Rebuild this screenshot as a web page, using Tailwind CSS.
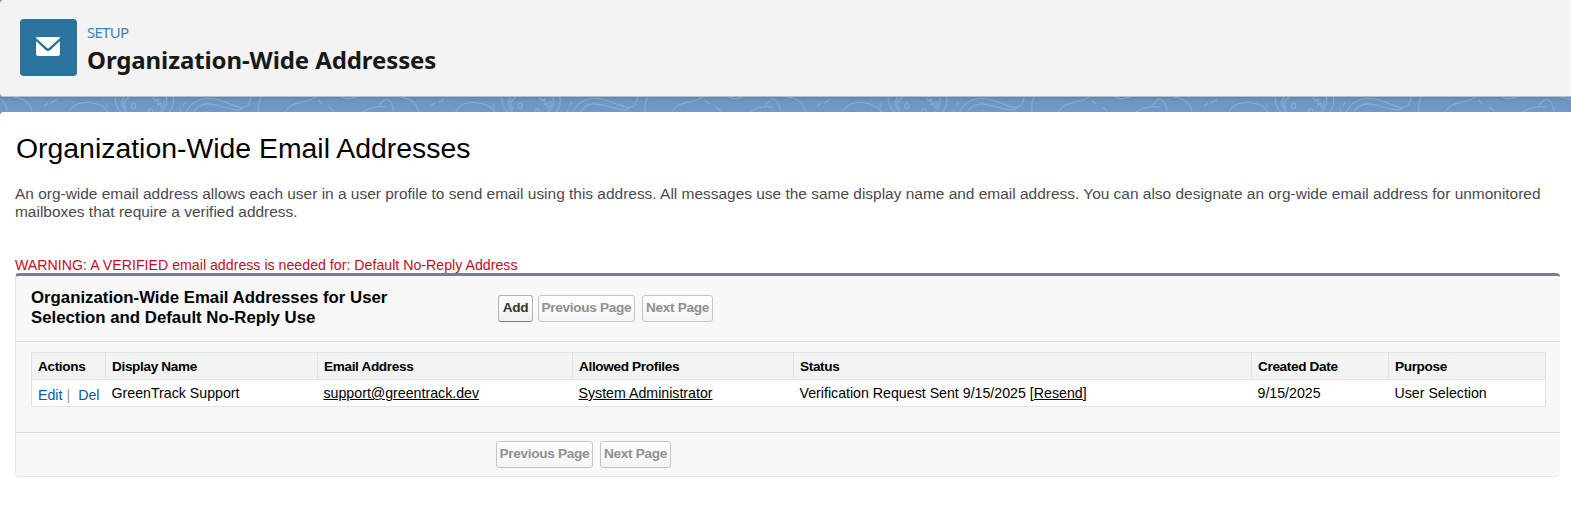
<!DOCTYPE html>
<html lang="en">
<head>
<meta charset="utf-8">
<title>Organization-Wide Addresses</title>
<script src="https://cdn.jsdelivr.net/npm/@tailwindcss/browser@4"></script>
</head>
<body class="h-[509px] overflow-hidden bg-[#6d98c5] font-['Liberation_Sans',Arial,sans-serif] text-black">
<header class="flex h-[97px] items-start rounded-l-[4px] border-b border-[#c0c0c0] bg-[#f3f3f3] pt-[19px] pl-5">
  <div class="flex size-[57px] items-center justify-center rounded-[4px] bg-[#2a739e]">
    <svg class="mt-[-2px] ml-[-1px]" width="24" height="19" viewBox="0 0 24 19" fill="#fff"><path d="M0 1Q0 0 1 0H23Q24 0 24 1L13.200 10.800Q12 11.800 10.800 10.800Z"/><path d="M0 4L9.600 13Q12 15 14.400 13L24 4V16.800Q24 19 21.800 19H2.200Q0 19 0 16.800Z"/></svg>
  </div>
  <div class="ml-[10px] whitespace-nowrap font-['Noto_Sans','Open_Sans',sans-serif]">
    <div class="mt-[3px] h-5 text-[15px] leading-5 tracking-[-0.75px] text-[#3a82b3]">SETUP</div>
    <h1 class="mt-[2px] h-8 text-[24px] leading-8 font-bold tracking-[-0.1px] text-[#181818]">Organization-Wide Addresses</h1>
  </div>
</header>
<svg class="block bg-linear-to-b from-[#6088b3] via-[#6c96c4] via-30% to-[#709bc9]" width="1571" height="15" viewBox="0 0 1571 15" fill="none">
  <defs>
    <pattern id="topo" width="386.7" height="15" patternUnits="userSpaceOnUse">
      <g stroke="#9ab9de" stroke-opacity=".65" stroke-width="1.1" fill="none">
        <path d="M0 2Q6 5 7 14M13 0Q29 1 32 15M44 9l4-3M51 6l6-4"/>
        <path d="M69 15C75 3 90 5 97 7Q105 10 108 15M107 6v5"/>
        <path d="M115 0Q115 10 121 15M124 0Q119 7 126 15M129 0Q120 7 127 12"/>
        <ellipse cx="133.500" cy="9" rx="2" ry="3"/>
        <path d="M149 15q-1-4 3-3l1 3M153 0l2 4 3-2 0 6 3-2 0 5 3-2V4M166 0Q169 8 161 15M173 0Q175 9 169 15M185 5l-2 4M181 12l-1 3"/>
        <path d="M186 15C194 0 207 0 219 3C232 7 243 15 249 7L251 0M194 15C201 3 213 7 223 10C232 12 238 15 243 11M261 0Q257 8 259 15"/>
        <path d="M285 15C292 3 303 8 316 0M318 3l5 4M329 10l5 4M342 0l5 2 10-2M363 15C373 8 388 8 397 14M378 10Q384 0 389 2Q394 4 394 11"/>
      </g>
    </pattern>
  </defs>
  <rect width="1571" height="15" fill="url(#topo)"/>
</svg>
<main class="h-[397px] rounded-tl-[4px] bg-white pl-[15px]">
  <h2 class="h-[72px] pt-[20px] pl-px text-[28.4px] leading-8 whitespace-nowrap">Organization-Wide Email Addresses</h2>
  <p class="h-[72px] pt-px text-[15.46px] leading-[18px] whitespace-nowrap text-[#4a4a4c]">An org-wide email address allows each user in a user profile to send email using this address. All messages use the same display name and email address. You can also designate an org-wide email address for unmonitored<br>mailboxes that require a verified address.</p>
  <p class="h-[17px] text-[14.2px] leading-[18px] whitespace-nowrap text-[#c00d24]">WARNING: A VERIFIED email address is needed for: Default No-Reply Address</p>
  <section class="h-[204px] w-[1545px] rounded-[4px] border-t-[3px] border-b border-l border-[#e5e5e5] border-t-[#747e96] bg-[#f8f8f8]">
    <div class="flex h-[66px] border-b border-[#d8d8d8] pl-[15px]">
      <h3 class="w-[467px] pt-[12px] text-[16.8px] leading-5 font-bold whitespace-nowrap">Organization-Wide Email Addresses for User<br>Selection and Default No-Reply Use</h3>
      <div class="flex pt-[19px] text-[13.6px] font-bold tracking-[-0.3px] whitespace-nowrap">
        <button class="h-[27px] w-[35px] rounded-[3px] border border-[#b5b5b5] border-b-[#7f7f7f] bg-linear-to-b from-white to-[#f0f0f0] text-[#333]">Add</button>
        <button class="ml-[5px] h-[27px] w-[97px] rounded-[3px] border border-[#c4c4c4] bg-linear-to-b from-white to-[#f4f4f4] text-[#909090]">Previous Page</button>
        <button class="ml-[7px] h-[27px] w-[71px] rounded-[3px] border border-[#c4c4c4] bg-linear-to-b from-white to-[#f4f4f4] text-[#909090]">Next Page</button>
      </div>
    </div>
    <div class="h-[91px] border-t border-b border-t-white border-b-[#d8d8d8] pt-[9px] pl-[15px]">
      <table class="w-[1515px] table-fixed border-collapse border border-[#e0e3e5] bg-white text-left text-[14.2px] leading-[18px] whitespace-nowrap">
        <colgroup><col class="w-[74px]"><col class="w-[212px]"><col class="w-[255px]"><col class="w-[221px]"><col class="w-[458px]"><col class="w-[137px]"><col></colgroup>
        <thead class="text-[13.6px] tracking-[-0.35px]"><tr class="h-[27px] border-b border-[#e0e3e5] bg-[#f2f3f3]">
          <th class="p-0 pt-px pl-[6px]">Actions</th>
          <th class="border-l border-[#e0e3e5] p-0 pt-px pl-[6px]">Display Name</th>
          <th class="border-l border-[#e0e3e5] p-0 pt-px pl-[6px]">Email Address</th>
          <th class="border-l border-[#e0e3e5] p-0 pt-px pl-[6px]">Allowed Profiles</th>
          <th class="border-l border-[#e0e3e5] p-0 pt-px pl-[6px]">Status</th>
          <th class="border-l border-[#e0e3e5] p-0 pt-px pl-[6px]">Created Date</th>
          <th class="border-l border-[#e0e3e5] p-0 pt-px pl-[6px]">Purpose</th>
        </tr></thead>
        <tbody><tr class="h-[27px]">
          <td class="p-0 pt-1 pl-[6px] text-[#015ba7]">Edit<span class="ml-1 text-[#999]">|</span><span class="ml-2">Del</span></td>
          <td class="p-0 pl-[6px]">GreenTrack Support</td>
          <td class="p-0 pl-[6px]"><a class="underline">support@greentrack.dev</a></td>
          <td class="p-0 pl-[6px]"><a class="underline">System Administrator</a></td>
          <td class="p-0 pl-[6px]">Verification Request Sent 9/15/2025 [<a class="underline">Resend</a>]</td>
          <td class="p-0 pl-[6px]">9/15/2025</td>
          <td class="p-0 pl-[6px]">User Selection</td>
        </tr></tbody>
      </table>
    </div>
    <div class="flex border-t border-white pt-[7px] pl-[480px] text-[13.6px] font-bold tracking-[-0.3px] whitespace-nowrap">
      <button class="h-[27px] w-[97px] rounded-[3px] border border-[#c4c4c4] bg-linear-to-b from-white to-[#f4f4f4] text-[#909090]">Previous Page</button>
      <button class="ml-[7px] h-[27px] w-[71px] rounded-[3px] border border-[#c4c4c4] bg-linear-to-b from-white to-[#f4f4f4] text-[#909090]">Next Page</button>
    </div>
  </section>
</main>
</body>
</html>
